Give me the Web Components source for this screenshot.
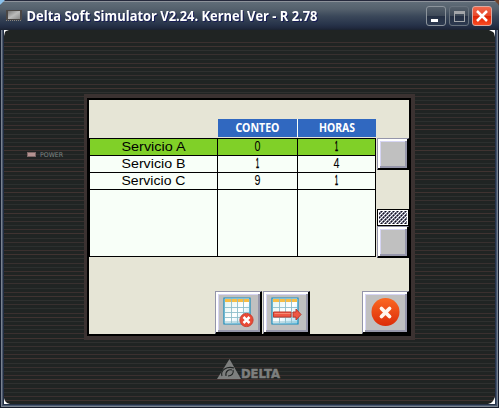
<!DOCTYPE html>
<html lang="es"><head><meta charset="utf-8"><title>Delta Soft Simulator</title>
<style>body{margin:0;background:#101728;overflow:hidden}</style></head><body>
<sim-window><hmi-device></hmi-device></sim-window>
<script>
const define=(name,html,setup)=>customElements.define(name,class extends HTMLElement{
  connectedCallback(){
    if(this.shadowRoot)return;
    const t=document.createElement('template');t.innerHTML=html;
    this.attachShadow({mode:'open'}).append(t.content.cloneNode(true));
    if(setup)setup(this,this.shadowRoot);
  }
});

// Text run fitted to a fixed advance width: attributes w, h, base, size, len
define('fit-text','<style>:host{display:block;flex:none}svg{display:block;overflow:visible}:host([heavy]) text{stroke:currentColor;stroke-width:.7px}</style><svg><text text-anchor="middle" lengthAdjust="spacingAndGlyphs" fill="currentColor"></text></svg>',(el,r)=>{
  const a=n=>el.getAttribute(n),s=r.querySelector('svg'),t=r.querySelector('text');
  s.setAttribute('width',a('w'));s.setAttribute('height',a('h'));
  t.setAttribute('x',a('w')/2);t.setAttribute('y',a('base'));t.setAttribute('font-size',a('size'));
  if(a('len'))t.setAttribute('textLength',a('len'));
  t.textContent=a('text');
});

define('caption-button',`<style>
:host{display:block;box-sizing:border-box;width:20px;height:20px;border:1px solid #8c949c;border-radius:3px;background:linear-gradient(#56616c,#3d4857 50%,#253044 52%,#2d3a50)}
:host([kind=close]){border-color:#d9aaa2;background:linear-gradient(#f0694d,#e8492b 48%,#de2505 52%,#fb4a22)}
:host([kind=max]){border-color:#68727d}
svg{display:block}</style><svg width="18" height="18"></svg>`,(el,r)=>{
  r.querySelector('svg').innerHTML={
    min:'<path d="M4 12h7v3H4z" fill="#fff"/>',
    max:'<path d="M4 4h11v11H4zM5 7v7h9V7z" fill="#a3a6aa" fill-rule="evenodd"/>',
    close:'<path d="M4 4l10 10M14 4L4 14" stroke="#fff" stroke-width="2.5"/>'
  }[el.getAttribute('kind')];
});

define('sim-window',`<style>
:host{display:grid;box-sizing:border-box;width:499px;height:408px;grid-template-rows:30px 374px;padding:0 4px 4px;
background:linear-gradient(#202b40,#27354c) 4px 404px/491px 1px no-repeat,linear-gradient(#49586e,#49586e) 3px 405px/493px 1px no-repeat,linear-gradient(#7b8490,#7b8490) 2px 406px/495px 1px no-repeat,linear-gradient(#141b2a,#141b2a) 0 407px/499px 1px no-repeat,linear-gradient(90deg,#141c2d 1px,#78818f 1px 2px,#4a5669 2px 3px,#222e43 3px 4px,#202423 4px 495px,#26334b 495px 496px,#45556f 496px 497px,#77818e 497px 498px,#151c2c 498px);position:relative}
header{display:flex;align-items:flex-start;margin:0 -4px;padding:0 6px;background:linear-gradient(#25293c 1px,#8d929a 1px 2px,#606d78 2px,#55616d 9px,#3b485a 16px,#263249 25px,#20293e 28px,#1b2230);border-radius:6px 6px 0 0;color:#fff;font:bold 14px "Open Sans",sans-serif}
.icon{margin-top:9px}fit-text{margin:7px 0 0 4px;filter:drop-shadow(1px 1px 0 #171d55)}
nav{display:flex;gap:3px;margin:6px 1px 0 auto}
.corner{position:absolute;left:0;top:0}
</style><header>
<svg class="icon" width="16" height="14"><defs><linearGradient id="g" x2="1" y2="1"><stop stop-color="#777"/><stop offset=".5" stop-color="#bbb"/><stop offset="1" stop-color="#888"/></linearGradient></defs><path d="M0 1h16v10H0z" fill="#4b4745"/><path d="M2 2h12v8H2z" fill="url(#g)"/><path d="M0 11.500h16" stroke="#8a8680" stroke-dasharray="1 1"/></svg>
<fit-text w="292" h="20" base="14" size="13.3" len="291" text="Delta Soft Simulator V2.24. Kernel Ver - R 2.78"></fit-text>
<nav><caption-button kind="min"></caption-button><caption-button kind="max"></caption-button><caption-button kind="close"></caption-button></nav></header><slot></slot>
<svg class="corner" width="499" height="408"><path d="M0 0h5L0 5z" fill="#8ac1ed"/><path d="M494 0h5v5z" fill="#70432d"/><g fill="#fff"><path d="M4 30h5l-3 1-1 1-1 4zM495 30h-6l4 2 1 1 1 4zM4 404v-6l1 3 2 2 3 1zM495 404v-7l-2 4-2 2-3 1z"/></g></svg>`);

define('bevel-button',`<style>
:host{display:flex;align-items:center;justify-content:center;box-sizing:border-box;
border:1px solid;border-color:#9495aa #000 #000 #9495aa;
box-shadow:inset -1px -1px #000,inset 2px 2px #fff,inset -3px -3px #9696aa,inset 3px 3px #d6d5f4;background:#c0c0c0}
</style><slot></slot>`);

define('data-table',`<style>
:host{display:grid;align-content:start;width:287px;grid-template-columns:128px 79px 78px;grid-template-rows:18px 119px;gap:1px;font-family:"Liberation Sans",sans-serif;color:#000}
.h{background:#3068c0;color:#fff;font:bold 11px "Noto Sans",sans-serif;display:flex;justify-content:center}
.h.none{background:none}.h.mid{box-shadow:1px 0 #f8fff8}
.grid{grid-column:1/4;box-sizing:border-box;width:287px;height:119px;background:#000;padding:1px;display:grid;grid-template:16px 16px 16px 66px/127px 79px 77px;gap:1px}
.c{background:#f8fff8;display:flex;justify-content:center}.on{background:#80d028}
</style><div class="h none"></div><div class="h mid"><fit-text w="79" h="18" base="13" size="11.5" len="44" text="CONTEO"></fit-text></div><div class="h"><fit-text w="78" h="18" base="13" size="11.5" len="36" text="HORAS"></fit-text></div><div class="grid"></div>`,(el,r)=>{
  const g=r.querySelector('.grid');
  [['Servicio A','0','1'],['Servicio B','1','4'],['Servicio C','9','1'],['','','']].forEach((row,i)=>row.forEach((v,j)=>{
    const c=document.createElement('div');c.className='c'+(i?'':' on');
    if(v){
      const w=[127,79,77][j];
      c.innerHTML=j===0?`<fit-text w="${w}" h="16" base="12" size="13" len="64" text="${v}"></fit-text>`
      :`<fit-text w="${w}" h="16" base="12" size="15" len="${v==='1'?3:6}" text="${v}"${v==='1'?' heavy':''}></fit-text>`;
    }
    g.append(c);
  }));
});

define('scroll-rail',`<style>
:host{display:grid;width:32px;height:120px;grid-template-rows:32px 39px 17px 32px}
.thumb{grid-row:3;box-sizing:border-box;border:1px solid #000;background:#fff;padding:1px}
svg{display:block}bevel-button{height:32px}
</style><bevel-button></bevel-button><div class="thumb"><svg width="28" height="13" shape-rendering="crispEdges"><defs><pattern id="p" width="4" height="4" patternUnits="userSpaceOnUse"><path d="M0 0h4v4H0z" fill="#77778c"/><path d="M0 0h1v1H0zM2 2h1v1H2zM3 1h1v1H3zM1 3h1v1H1z" fill="#fff"/><path d="M2 0h1v1H2zM0 2h1v1H0z" fill="#10101c"/></pattern></defs><path d="M0 0h28v13H0z" fill="url(#p)"/></svg></div><bevel-button style="grid-row:4"></bevel-button>`);

define('tool-icon','<style>:host{display:block}svg{display:block}</style><div></div>',(el,r)=>{
  const kind=el.getAttribute('kind');
  const sheet='<defs><linearGradient id="s" x2="1" y2="1"><stop stop-color="#dff2ef"/><stop offset=".55" stop-color="#fff"/><stop offset="1" stop-color="#9edcf3"/></linearGradient></defs><path d="M1 1h26v26H1z" fill="url(#s)" stroke="#168cbb" stroke-width="1.2"/><path d="M2 2h24v3H2z" fill="#f7bd45"/><path d="M8.5 2v24M14.5 2v24M20.5 2v24M2 10.5h24M2 15.5h24M2 20.5h24M2 25h24" stroke="#8dbdcb" stroke-width=".9"/>';
  r.querySelector('div').innerHTML=kind==='stop'
  ?'<svg width="30" height="30"><defs><linearGradient id="o" x2="0" y2="1"><stop stop-color="#fb6822"/><stop offset="1" stop-color="#dc2c08"/></linearGradient></defs><circle cx="14.500" cy="14" r="14" fill="url(#o)"/><path d="M10.500 10.500l8 8M18.500 10.500l-8 8" stroke="#fff6ed" stroke-width="3.800" stroke-linecap="round"/></svg>'
  :kind==='clear'
  ?'<svg width="32" height="32">'+sheet+'<circle cx="23.500" cy="23" r="6.6" fill="#ea4935" stroke="#c94232"/><path d="M20.500 20l6 6M26.500 20l-6 6" stroke="#fff" stroke-width="2.5"/></svg>'
  :'<svg width="32" height="32">'+sheet+'<path d="M2.5 15h17.500v5H2.5zM22 15h3v-3l5 5.500-5 5.500v-3h-3z" fill="#ee5744" stroke="#be392d"/><path d="M3.5 16.500h16" stroke="#f68a73"/></svg>';
});

define('hmi-screen',`<style>
:host{display:grid;box-sizing:border-box;width:331px;height:246px;border:solid #3b3231;border-width:4px 4px 4px 3px;padding:2px;background:#000}
.screen{background:#e6e5d6;display:grid;grid-template-rows:19px 139px 33px 43px;width:320px;height:234px}
.main{grid-row:2;display:flex;gap:1px}scroll-rail{margin-top:19px}
.tools{grid-row:4;display:flex;padding-left:126px;gap:1px}.tools bevel-button{width:47px;height:43px}.tools .last{margin-left:auto}
</style><div class="screen"><div class="main"><data-table></data-table><scroll-rail></scroll-rail></div>
<div class="tools"><bevel-button><tool-icon kind="clear"></tool-icon></bevel-button><bevel-button><tool-icon kind="move"></tool-icon></bevel-button><bevel-button class="last"><tool-icon kind="stop"></tool-icon></bevel-button></div></div>`);

define('delta-logo',`<style>:host{display:block}svg{display:block;overflow:visible}</style><svg width="80" height="26"><path d="M12.500 0L24 20H0z" fill="#7d7f7e"/><path d="M5 17C3 11 10 7 17 9M9 17c-1-5 3-7 6-6M16 11c1 3-1 6-5 6" fill="none" stroke="#202423" stroke-width="1.100"/><text x="24" y="19" font-family="DejaVu Sans,sans-serif" font-size="12.500" font-weight="bold" textLength="39" lengthAdjust="spacingAndGlyphs" fill="#7d7f7e" stroke="#7d7f7e" stroke-width=".5">DELTA</text></svg>`);

define('hmi-device',`<style>
:host{display:grid;width:491px;height:374px;grid-template:64px 246px 64px/80px 331px 80px;background-color:#202423}
.power{display:flex;align-items:flex-start;padding:57px 0 0 23px;gap:4px}
i{width:7px;height:3px;background:#b59391;border:1px solid #7e6766;margin-top:1px}
.power fit-text{font-family:"DejaVu Sans",sans-serif;color:#7e8583}
hmi-screen{grid-column:2}delta-logo{grid-row:3;grid-column:2;margin:19px 0 0 133px}
</style><div class="power" style="grid-row:2"><i></i><fit-text w="23" h="8" base="6" size="6.5" len="23" text="POWER"></fit-text></div><hmi-screen style="grid-row:2"></hmi-screen><delta-logo></delta-logo>`,el=>{
  // Fine horizontal ribs of the plastic front, alternating neutral and brown
  const stops=[];let p=0;
  for(let k=0;k<87;k++){
    const y=Math.round(12+k*4.163);
    const c=['#3b302f','#403331','#2f302f','#38302f','#2c2f2e'][k%5];
    stops.push(`#202423 ${p}px ${y}px`,`${c} ${y}px ${y+1}px`);p=y+1;
  }
  el.style.backgroundImage=`linear-gradient(${stops.join()},#202423 ${p}px)`;
});
</script></body></html>
